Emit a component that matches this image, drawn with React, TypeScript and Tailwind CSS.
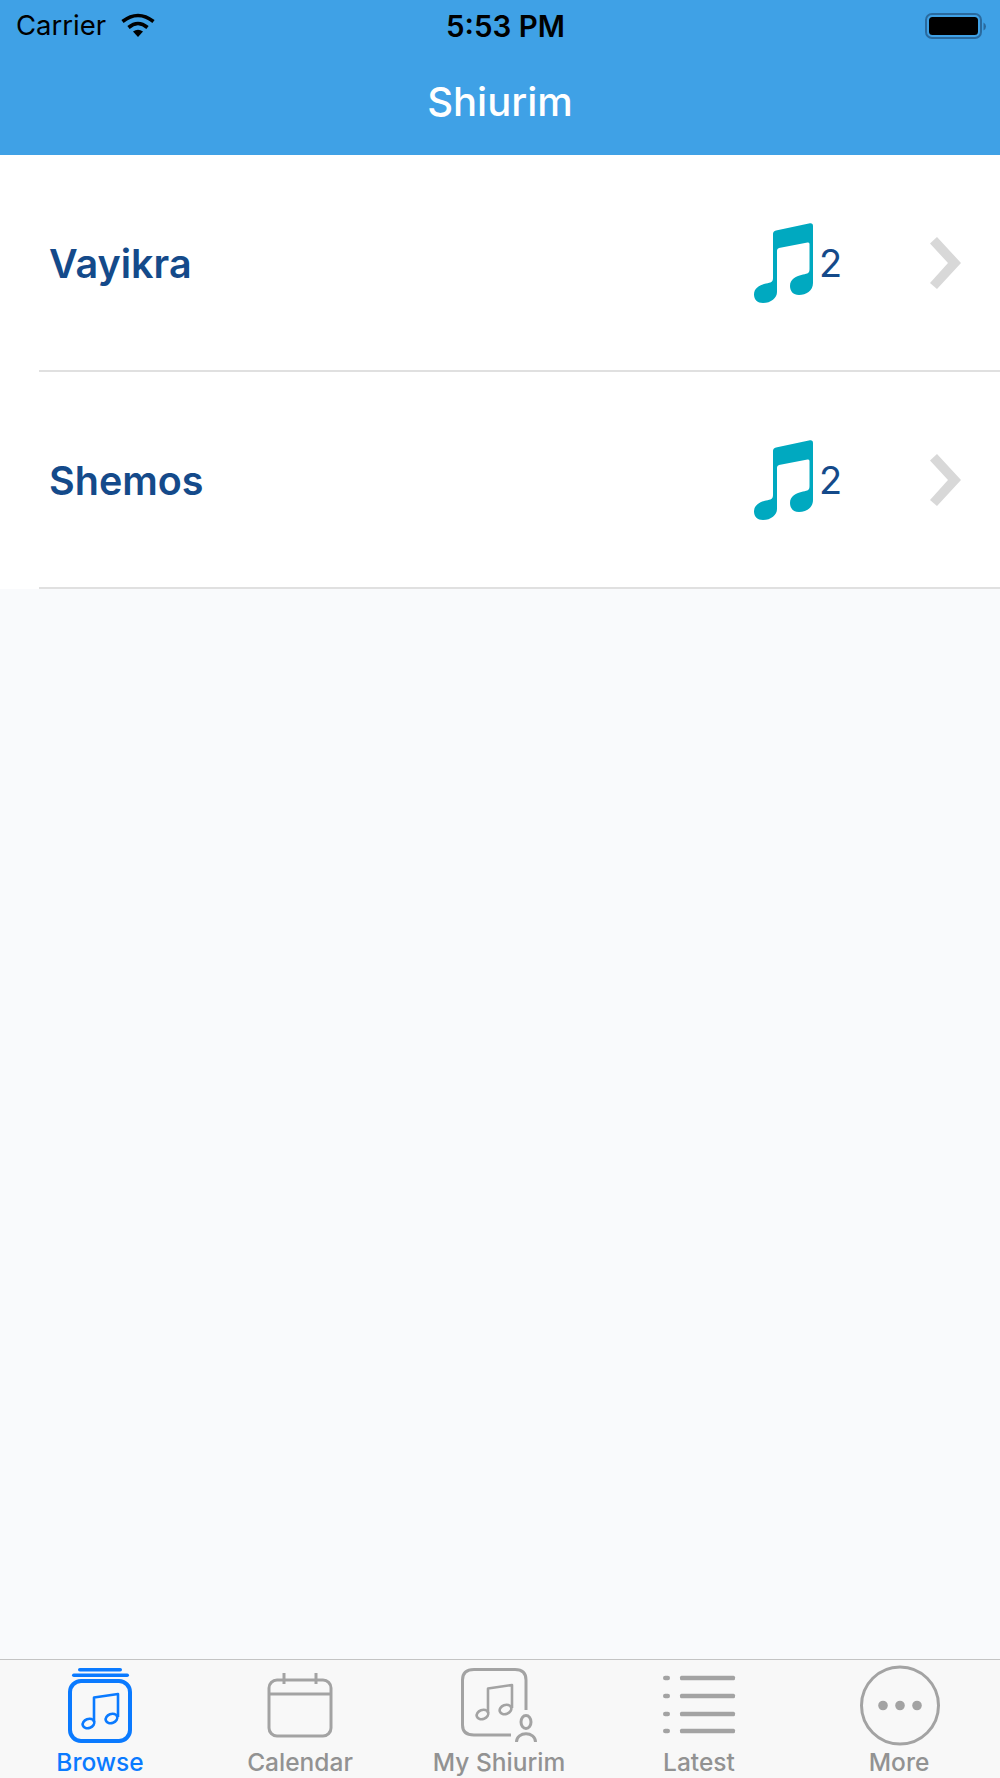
const font = { fontFamily: 'Inter, "Liberation Sans", sans-serif' };

const NoteIcon = () => (
  <svg width="60" height="80" viewBox="0 0 60 80" className="shrink-0 ml-[2px] mt-[1px]">
    <path
      fill="#00a9c0"
      fillRule="evenodd"
      d="M22 7.6 L56 0.3 Q59 0 59 3 L59 60 C59 68 52 72 45 72 C39 72 36 68 36 63 C36 56 42 53 49 51.5 C54 50.5 55.5 50 55.5 46 L55.5 21 Q55.5 19 53.5 19.5 L25 25 Q23 25.5 23 27.5 L23 69 C23 75 17 80 9 80 C3.5 80 0 76.5 0 71.5 C0 65 6 62 12 60.5 C17 59.5 19 59 19 55 L19 11 Q19 8.3 22 7.6 Z"
    />
  </svg>
);

const Chevron = () => (
  <svg width="32" height="54" viewBox="0 0 32 54" className="shrink-0 mt-[2px]">
    <path fill="#d8d8d8" d="M0 6.5 L7 0 L31 26 L7 52 L0 46 L18 26 Z" />
  </svg>
);

const Row = ({ title, count }: { title: string; count: number }) => (
  <div className="ml-[39px] h-[217px] flex items-center border-b-2 border-[#e0e0e0] pl-[10px] pr-[38px]">
    <div className="flex-1 pt-[5px] text-[39.5px] font-semibold text-[#144a8a]">{title}</div>
    <NoteIcon />
    <div className="ml-[5px] mt-[1px] w-[21px] text-[38px] text-[#144a8a] leading-none">{count}</div>
    <div className="ml-[90px]">
      <Chevron />
    </div>
  </div>
);

const MiniNote = ({ stroke, x, y }: { stroke: string; x: number; y: number }) => (
  <g transform={`translate(${x} ${y})`} fill="none" stroke={stroke} strokeWidth="2.6" strokeLinejoin="round">
    <path d="M11 29 V4.5 L35 1 V24" />
    <ellipse cx="5.5" cy="30.5" rx="6" ry="4.5" transform="rotate(-20 5.5 30.5)" />
    <ellipse cx="28.5" cy="25.5" rx="6" ry="4.5" transform="rotate(-20 28.5 25.5)" />
  </g>
);

const tabs = [
  {
    label: 'Browse',
    active: true,
    labelClass: 'text-[#0a7aff]',
    icon: (
      <>
        <rect x="28" y="8" width="44" height="3.5" rx="1.75" fill="#0a7aff" />
        <rect x="22" y="13.5" width="57" height="3.5" rx="1.75" fill="#0a7aff" />
        <rect x="20" y="21" width="60" height="60" rx="11" fill="none" stroke="#0a7aff" strokeWidth="4" />
        <MiniNote stroke="#0a7aff" x="33" y="33" />
      </>
    ),
  },
  {
    label: 'Calendar',
    labelClass: 'text-[#929292]',
    icon: (
      <g fill="none" stroke="#a3a3a3" strokeWidth="3">
        <rect x="19" y="20" width="62" height="56" rx="8" />
        <path d="M19 34 H81 M34 13 V24 M66 13 V24" />
      </g>
    ),
  },
  {
    label: 'My Shiurim',
    labelClass: 'text-[#929292] mr-[2px]',
    icon: (
      <g fill="none" stroke="#a3a3a3" strokeWidth="3">
        <path d="M61 75 H24 Q12.5 75 12.5 65 V20 Q12.5 9.5 24 9.5 H65 Q76 9.5 76 20 V50" />
        <MiniNote stroke="#a3a3a3" x="27" y="24" />
        <ellipse cx="76" cy="62" rx="5" ry="6.5" />
        <path d="M66.5 82 C66.5 71 85.5 71 85.5 82" />
      </g>
    ),
  },
  {
    label: 'Latest',
    labelClass: 'text-[#929292] mr-[2px]',
    icon: (
      <g fill="#a3a3a3">
        {[18, 36, 54, 71].map(y => (
          <g key={y}>
            <rect x="13" y={y - 2.25} width="7" height="4.5" rx="2.25" />
            <rect x="30" y={y - 2.25} width="55" height="4.5" rx="1.5" />
          </g>
        ))}
      </g>
    ),
  },
  {
    label: 'More',
    labelClass: 'text-[#929292] mr-[2px]',
    icon: (
      <>
        <circle cx="50" cy="45.5" r="38.5" fill="none" stroke="#a3a3a3" strokeWidth="3" />
        <circle cx="33" cy="45.5" r="4.8" fill="#a3a3a3" />
        <circle cx="50" cy="45.5" r="4.8" fill="#a3a3a3" />
        <circle cx="67" cy="45.5" r="4.8" fill="#a3a3a3" />
      </>
    ),
  },
];

export default function App() {
  return (
    <div className="w-full h-[1778px] flex flex-col bg-[#f9fafc] overflow-hidden" style={font}>
      <div className="h-[155px] shrink-0 bg-[#3fa1e6]">
        <div className="h-[50px] pt-[2px] flex items-center text-black text-[27.5px]">
          <div className="flex-1 flex items-center pl-[16px]">
            <span>Carrier</span>
            <svg width="34" height="24" viewBox="0 0 34 24" className="ml-[15px] mb-[2px]">
              <g fill="none" stroke="#000" strokeWidth="3.6">
                <path d="M1.5 8.5 Q17 -3.5 32.5 8.5" />
                <path d="M7.5 14.5 Q17 6.5 26.5 14.5" />
              </g>
              <path d="M12 18.5 Q17 15 22 18.5 L17 24 Z" fill="#000" />
            </svg>
          </div>
          <div className="w-[116px] text-center text-[29.5px] font-semibold whitespace-nowrap ml-[5px]">5:53 PM</div>
          <div className="flex-1 flex justify-end pr-[13px]">
            <svg width="62" height="27" viewBox="0 0 62 27">
              <rect x="1" y="1" width="55" height="24" rx="6" fill="none" stroke="#2a6a9e" strokeWidth="2" />
              <rect x="4" y="4" width="49" height="18" rx="3.5" fill="#000" />
              <path d="M58.5 9.5 Q61 11 61 13.5 Q61 16 58.5 17.5 Z" fill="#2a6a9e" />
            </svg>
          </div>
        </div>
        <div className="h-[105px] flex items-center justify-center text-white text-[40px] font-medium pb-[1px]">
          Shiurim
        </div>
      </div>

      <div className="bg-white">
        <Row title="Vayikra" count={2} />
        <Row title="Shemos" count={2} />
      </div>

      <div className="flex-1" />

      <div className="h-[119px] shrink-0 bg-[#f8f8f8] border-t border-[#c4c4c4] flex">
        {tabs.map(t => (
          <div key={t.label} className="flex-1 flex flex-col items-center">
            <svg width="100" height="90" viewBox="0 0 100 90" className="shrink-0">
              {t.icon}
            </svg>
            <div className={`-mt-[2px] text-[24.5px] leading-[28px] font-medium whitespace-nowrap ${t.labelClass}`}>
              {t.label}
            </div>
          </div>
        ))}
      </div>
    </div>
  );
}
